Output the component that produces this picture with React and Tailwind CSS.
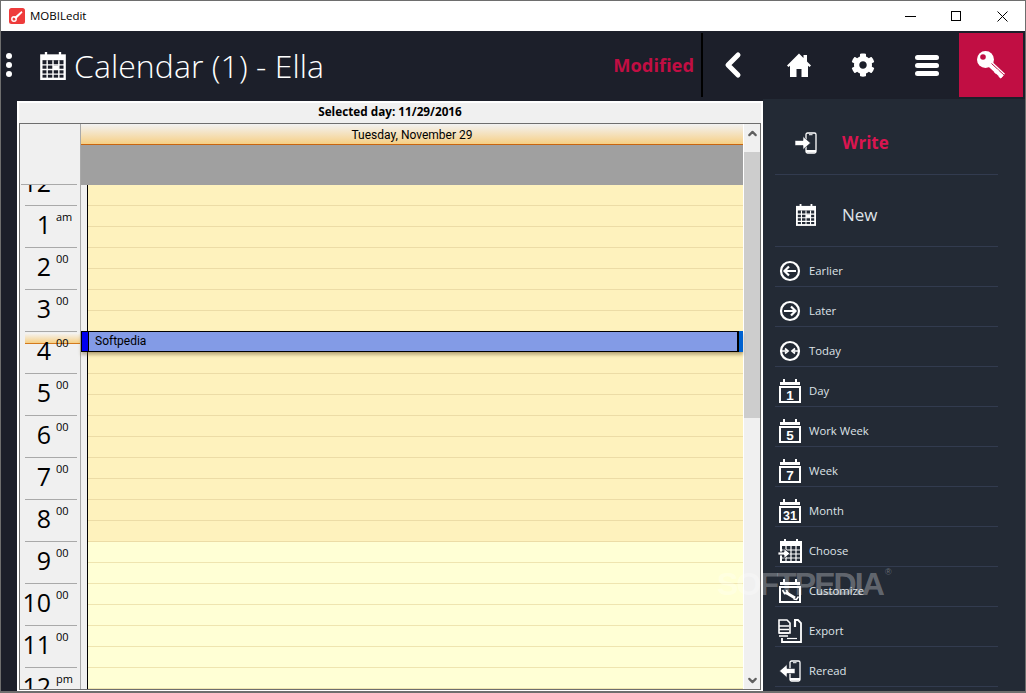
import { ChevronLeft, ChevronUp, ChevronDown } from "lucide-react";
import { FaCog } from "react-icons/fa";

const hours = [
  { h: "12", s: "" },
  { h: "1", s: "am" },
  { h: "2", s: "00" },
  { h: "3", s: "00" },
  { h: "4", s: "00" },
  { h: "5", s: "00" },
  { h: "6", s: "00" },
  { h: "7", s: "00" },
  { h: "8", s: "00" },
  { h: "9", s: "00" },
  { h: "10", s: "00" },
  { h: "11", s: "00" },
  { h: "12", s: "pm" },
];

// calendar outline shared by the sidebar day icons
const CalFrame = ({ children }) => (
  <svg width="22" height="24" viewBox="0 0 22 24" fill="none" className="overflow-visible">
    <path d="M5 0v3M17 0v3" stroke="#fff" strokeWidth="2" />
    <rect x="1" y="3" width="20" height="3" fill="#fff" />
    <rect x="1" y="8" width="20" height="15" stroke="#fff" strokeWidth="2" />
    {children}
  </svg>
);

const GridCal = ({ size = 22 }) => (
  <svg width={size} height={size + 2} viewBox="0 0 22 24" fill="none">
    <path d="M5 0v3M17 0v3" stroke="#fff" strokeWidth="2" />
    <rect x="1" y="3" width="20" height="20" stroke="#fff" strokeWidth="2" />
    <rect x="1" y="3" width="20" height="4" fill="#fff" />
    <path d="M1 11h20M1 15h20M1 19h20M6 7v16M11 7v16M16 7v16" stroke="#fff" strokeWidth="1.2" />
    <rect x="11" y="11.5" width="5" height="3.5" fill="#fff" />
  </svg>
);

const ChooseIcon = () => (
  <svg width="24" height="24" viewBox="0 0 24 24" fill="none">
    <path d="M7 0v3M19 0v3" stroke="#fff" strokeWidth="2" />
    <rect x="3" y="3" width="20" height="20" stroke="#fff" strokeWidth="2" />
    <rect x="3" y="3" width="20" height="4" fill="#fff" />
    <path d="M3 11h20M3 15h20M3 19h20M8 7v16M13 7v16M18 7v16" stroke="#fff" strokeWidth="1.2" />
    <path d="M0 13h6V9.5l6 5-6 5V16H0z" fill="#fff" stroke="#232a35" strokeWidth="0.8" />
  </svg>
);

const NumCal = ({ n }) => (
  <CalFrame>
    <text x="11" y="20.5" textAnchor="middle" fontSize={n.length > 1 ? "12.5" : "13.5"} fontWeight="700" fill="#fff" fontFamily="Liberation Sans, sans-serif">
      {n}
    </text>
  </CalFrame>
);

const CircleArrow = ({ kind }) => (
  <svg width="22" height="22" viewBox="0 0 22 22" fill="none" stroke="#fff">
    <circle cx="11" cy="11" r="9" strokeWidth="2.2" />
    {kind === "left" && <path d="M17 11H6M10 6.5 5.5 11l4.5 4.5" strokeWidth="2.2" />}
    {kind === "right" && <path d="M5 11h11M12 6.5l4.5 4.5-4.5 4.5" strokeWidth="2.2" />}
    {kind === "today" && <path d="M3 11h4M6 8.5 9 11l-3 2.5M19 11h-4M16 8.5 13 11l3 2.5" strokeWidth="1.7" />}
  </svg>
);

const PhoneArrow = ({ dir }) => (
  <svg width="22" height="22" viewBox="0 0 22 22" fill="none">
    <rect x="11" y="1" width="10" height="20" rx="1.5" stroke="#fff" strokeWidth="1.3" />
    <path d="M11 18h10v2.5H11z" fill="#fff" />
    <rect x="14" y="2.2" width="3.5" height="1" fill="#fff" />
    {dir === "in" ? (
      <path d="M0 8.5h8V4.5l7.5 6.5L8 17.5v-4H0z" fill="#fff" stroke="#232a35" strokeWidth="0.6" />
    ) : (
      <path d="M16 8.5H8V4.5L0.5 11 8 17.5v-4h8z" fill="#fff" stroke="#232a35" strokeWidth="0.6" />
    )}
  </svg>
);

const CustomizeIcon = () => (
  <CalFrame>
    <path d="M7 13.5l9 5.5" stroke="#fff" strokeWidth="3" />
    <path d="M3.5 11l2 3.5 3-1-1-2.5M14.5 20l3 .5 2-3" stroke="#fff" strokeWidth="1.6" />
  </CalFrame>
);

const ExportIcon = () => (
  <svg width="24" height="24" viewBox="0 0 24 24" fill="none" stroke="#fff">
    <path d="M1 1h8l3 3v10H1z" fill="#232a35" strokeWidth="1.6" />
    <path d="M1 7h10M1 10.5h10M1 14h10M1 17h9" strokeWidth="1.6" />
    <path d="M16 1h4l3 3v19H4v-4" strokeWidth="1.8" />
    <path d="M17 2v6" strokeWidth="2.2" />
    <path d="M9 19.5h10" strokeWidth="1.2" />
  </svg>
);

const HomeIcon = () => (
  <svg width="24" height="24" viewBox="0 0 24 24" fill="#fff">
    <path d="M12 0.5 0 12.5l1.5 1.500L3 12.800V24h6.500v-8h5v8H21V12.800l1.500 1.200 1.500-1.500-4-4V2h-3.500v3z" />
  </svg>
);

const KeyIcon = () => (
  <svg width="28" height="28" viewBox="0 0 28 28" fill="none">
    <circle cx="8.5" cy="8.500" r="8.500" fill="#fff" />
    <circle cx="6" cy="6" r="2.800" fill="#c10e43" />
    <path d="M11 11 26 25" stroke="#fff" strokeWidth="6" />
    <path d="M14.500 12.500 28 25" stroke="#c10e43" strokeWidth="1" />
    <path d="M18 22l3-3M22.500 26.500l3-3" stroke="#fff" strokeWidth="3" />
  </svg>
);

const sideItems = [
  { label: "Earlier", icon: <CircleArrow kind="left" /> },
  { label: "Later", icon: <CircleArrow kind="right" /> },
  { label: "Today", icon: <CircleArrow kind="today" /> },
  { label: "Day", icon: <NumCal n="1" /> },
  { label: "Work Week", icon: <NumCal n="5" /> },
  { label: "Week", icon: <NumCal n="7" /> },
  { label: "Month", icon: <NumCal n="31" /> },
  { label: "Choose", icon: <ChooseIcon /> },
  { label: "Customize", icon: <CustomizeIcon /> },
  { label: "Export", icon: <ExportIcon /> },
  { label: "Reread", icon: <PhoneArrow dir="out" /> },
];

const HourRow = ({ h, s }) => (
  <div className="h-[42px] ml-[5px] mr-[3px] border-b border-[#a9a9a9] relative shrink-0">
    <span className="absolute right-[26px] top-[3px] text-[25px] leading-[30px] text-black">{h}</span>
    <span className="absolute left-[31px] top-[3px] text-[11px] leading-[16px] text-black">{s}</span>
  </div>
);

export default function App() {
  const rows = Array.from({ length: 24 });

  return (
    <div
      className="w-[1026px] h-[693px] relative overflow-hidden flex flex-col border-x border-t border-b-2 border-[#6e6e6e] bg-[#1c1f2a]"
      style={{ fontFamily: '"Open Sans", "Noto Sans", sans-serif' }}
    >
      {/* title bar */}
      <div className="h-[30px] bg-white flex items-center shrink-0">
        <svg width="16" height="16" viewBox="0 0 16 16" className="ml-[8px] mr-[5px]">
          <rect width="16" height="16" rx="2.5" fill="#ee3b3b" />
          <path d="M5 9.5 12.5 3l1 1.500L7 11z" fill="#fff" />
          <circle cx="5" cy="11" r="2.200" fill="none" stroke="#fff" strokeWidth="1.400" />
        </svg>
        <span className="text-[11.5px] text-black">MOBILedit</span>
        <div className="ml-auto flex items-center">
          <div className="w-[46px] flex justify-center">
            <span className="w-[11px] h-[1px] bg-black" />
          </div>
          <div className="w-[46px] flex justify-center">
            <span className="w-[10px] h-[10px] border border-black" />
          </div>
          <div className="w-[46px] flex justify-center">
            <svg width="11" height="11" viewBox="0 0 11 11" stroke="#000" strokeWidth="1">
              <path d="M0.5 0.5l10 10M10.5 0.5l-10 10" />
            </svg>
          </div>
        </div>
      </div>

      {/* header */}
      <div className="h-[66px] pt-[2px] shrink-0 flex items-center">
        <div className="w-[16px] flex flex-col items-center gap-[3px]">
          <span className="w-[6px] h-[6px] rounded-full bg-white" />
          <span className="w-[6px] h-[6px] rounded-full bg-white" />
          <span className="w-[6px] h-[6px] rounded-full bg-white" />
        </div>
        <div className="ml-[23px] mr-[9px] mt-[2px]">
          <GridCal size={26} />
        </div>
        <h1 className="text-[32px] leading-[40px] text-white font-light -ml-[1px] mt-[2px] tracking-[0.06px]">
          Calendar (1) - Ella
        </h1>
        <span className="ml-auto mr-[7px] text-[18.3px] font-bold text-[#c10e43]">Modified</span>
        <div className="w-[2px] h-[64px] bg-black" />
        <div className="w-[64px] flex justify-center -translate-x-[2px]">
          <ChevronLeft size={40} strokeWidth={3} color="#fff" />
        </div>
        <div className="w-[64px] flex justify-center">
          <HomeIcon />
        </div>
        <div className="w-[64px] flex justify-center">
          <FaCog size={24} color="#fff" />
        </div>
        <div className="w-[64px] flex flex-col items-center gap-[3px]">
          <span className="w-[24px] h-[5px] rounded-full bg-white" />
          <span className="w-[24px] h-[5px] rounded-full bg-white" />
          <span className="w-[24px] h-[5px] rounded-full bg-white" />
        </div>
        <div className="w-[64px] h-[64px] bg-[#c10e43] flex items-center justify-center mr-[2px]">
          <KeyIcon />
        </div>
      </div>

      <div className="flex-1 flex min-h-0">
        {/* calendar */}
        <div className="w-[746px] ml-[16px] mt-[4px] bg-[#f0f0f0] border-2 border-b border-white flex flex-col min-h-0 shrink-0">
          <div className="h-[20px] shrink-0 text-center text-[11.75px] font-bold leading-[16px] text-black">
            Selected day: 11/29/2016
          </div>
          <div className="flex-1 min-h-0 border border-[#6e6e6e] flex">
            {/* hour gutter */}
            <div className="w-[61px] bg-[#f0f0f0] border-r border-[#a9a9a9] shrink-0 flex flex-col overflow-hidden relative">
              <div className="absolute left-[5px] right-0 top-[209px] h-[11px] border-b border-[#d37a1d] bg-gradient-to-b from-[#f4f4f4] to-[#f6cf83]" />
              <div className="h-[61px] bg-[#f0f0f0] shrink-0 relative z-10 border-b border-[#a9a9a9] ml-[1px] mr-[3px]" />
              <div className="flex flex-col -mt-[21px]">
                {hours.map((item, i) => (
                  <HourRow key={i} h={item.h} s={item.s} />
                ))}
              </div>
            </div>

            {/* day column */}
            <div
              className="flex-1 min-w-0 flex flex-col relative"
              style={{ fontFamily: 'Roboto, "Open Sans", sans-serif' }}
            >
              <div className="h-[20px] shrink-0 bg-gradient-to-b from-[#f2f2f2] to-[#f6cf83] text-center text-[12px] leading-[23px] text-black">
                Tuesday, November 29
              </div>
              <div className="h-[1px] shrink-0 bg-[#c8650f]" />
              <div className="h-[40px] shrink-0 bg-[#a0a0a0]" />
              <div className="flex-1 min-h-0 overflow-hidden flex relative">
                <div className="w-[7px] bg-[#f0f0f0] border-r border-black shrink-0" />
                <div className="flex-1 flex flex-col">
                  {rows.map((_, i) => (
                    <div
                      key={i}
                      className={
                        i < 17
                          ? "h-[21px] shrink-0 bg-[#fef2bd] border-b border-[#ecdca6]"
                          : "h-[21px] shrink-0 bg-[#ffffd5] border-b border-[#efe5b0]"
                      }
                    />
                  ))}
                </div>
              </div>
              {/* event */}
              <div className="absolute left-0 right-0 top-[207px] h-[21px] flex shadow-[0_3px_3px_rgba(120,100,60,0.45)]">
                <div className="w-[7px] bg-[#0000f0] border-y border-l border-black" />
                <div className="flex-1 bg-[#839be6] border-y border-r-2 border-l border-black text-[12px] leading-[18px] pl-[6px] text-black">
                  Softpedia
                </div>
                <div className="w-[4px] bg-[#0062d0]" />
              </div>
            </div>

            {/* scrollbar */}
            <div className="w-[17px] shrink-0 bg-[#f0f0f0] border-l border-white flex flex-col">
              <div className="h-[28px] flex items-center justify-center shrink-0">
                <ChevronUp size={13} strokeWidth={4} color="#606060" className="-mt-[9px]" />
              </div>
              <div className="h-[266px] bg-[#cdcdcd] shrink-0" />
              <div className="flex-1" />
              <div className="h-[14px] flex items-center justify-center shrink-0">
                <ChevronDown size={13} strokeWidth={4} color="#606060" className="-mt-[4px]" />
              </div>
            </div>
          </div>
        </div>

        {/* side menu */}
        <div className="flex-1 mt-[2px] bg-[#232a35] pl-[12px] pr-[27px] flex flex-col">
          <div className="h-[76px] pt-[12px] shrink-0 border-b border-[#323b4f] flex items-center">
            <div className="w-[61px] mr-[6px] flex justify-center">
              <PhoneArrow dir="in" />
            </div>
            <span className="text-[17px] font-bold text-[#da1550]">Write</span>
          </div>
          <div className="h-[72px] pt-[8px] shrink-0 border-b border-[#323b4f] flex items-center">
            <div className="w-[61px] mr-[6px] flex justify-center">
              <GridCal size={20} />
            </div>
            <span className="text-[17px] text-[#dfe3e8]">New</span>
          </div>
          {sideItems.map((item) => (
            <div key={item.label} className="h-[40px] pt-[8px] shrink-0 border-b border-[#323b4f] flex items-center">
              <div className="w-[30px] flex justify-center mr-[4px]">{item.icon}</div>
              <span className="text-[11.3px] mt-[1px] text-[#dfe3e8]">{item.label}</span>
            </div>
          ))}
        </div>
      </div>

      {/* watermark */}
      <div
        className="absolute left-[716px] top-[564px] text-[32px] leading-[38px] font-bold tracking-[-1.9px] text-white/30 pointer-events-none flex"
        style={{ fontFamily: '"Liberation Sans", sans-serif' }}
      >
        SOFTPEDIA
        <span className="text-[9px] leading-[14px] tracking-normal font-normal ml-[2px]">®</span>
      </div>
    </div>
  );
}
